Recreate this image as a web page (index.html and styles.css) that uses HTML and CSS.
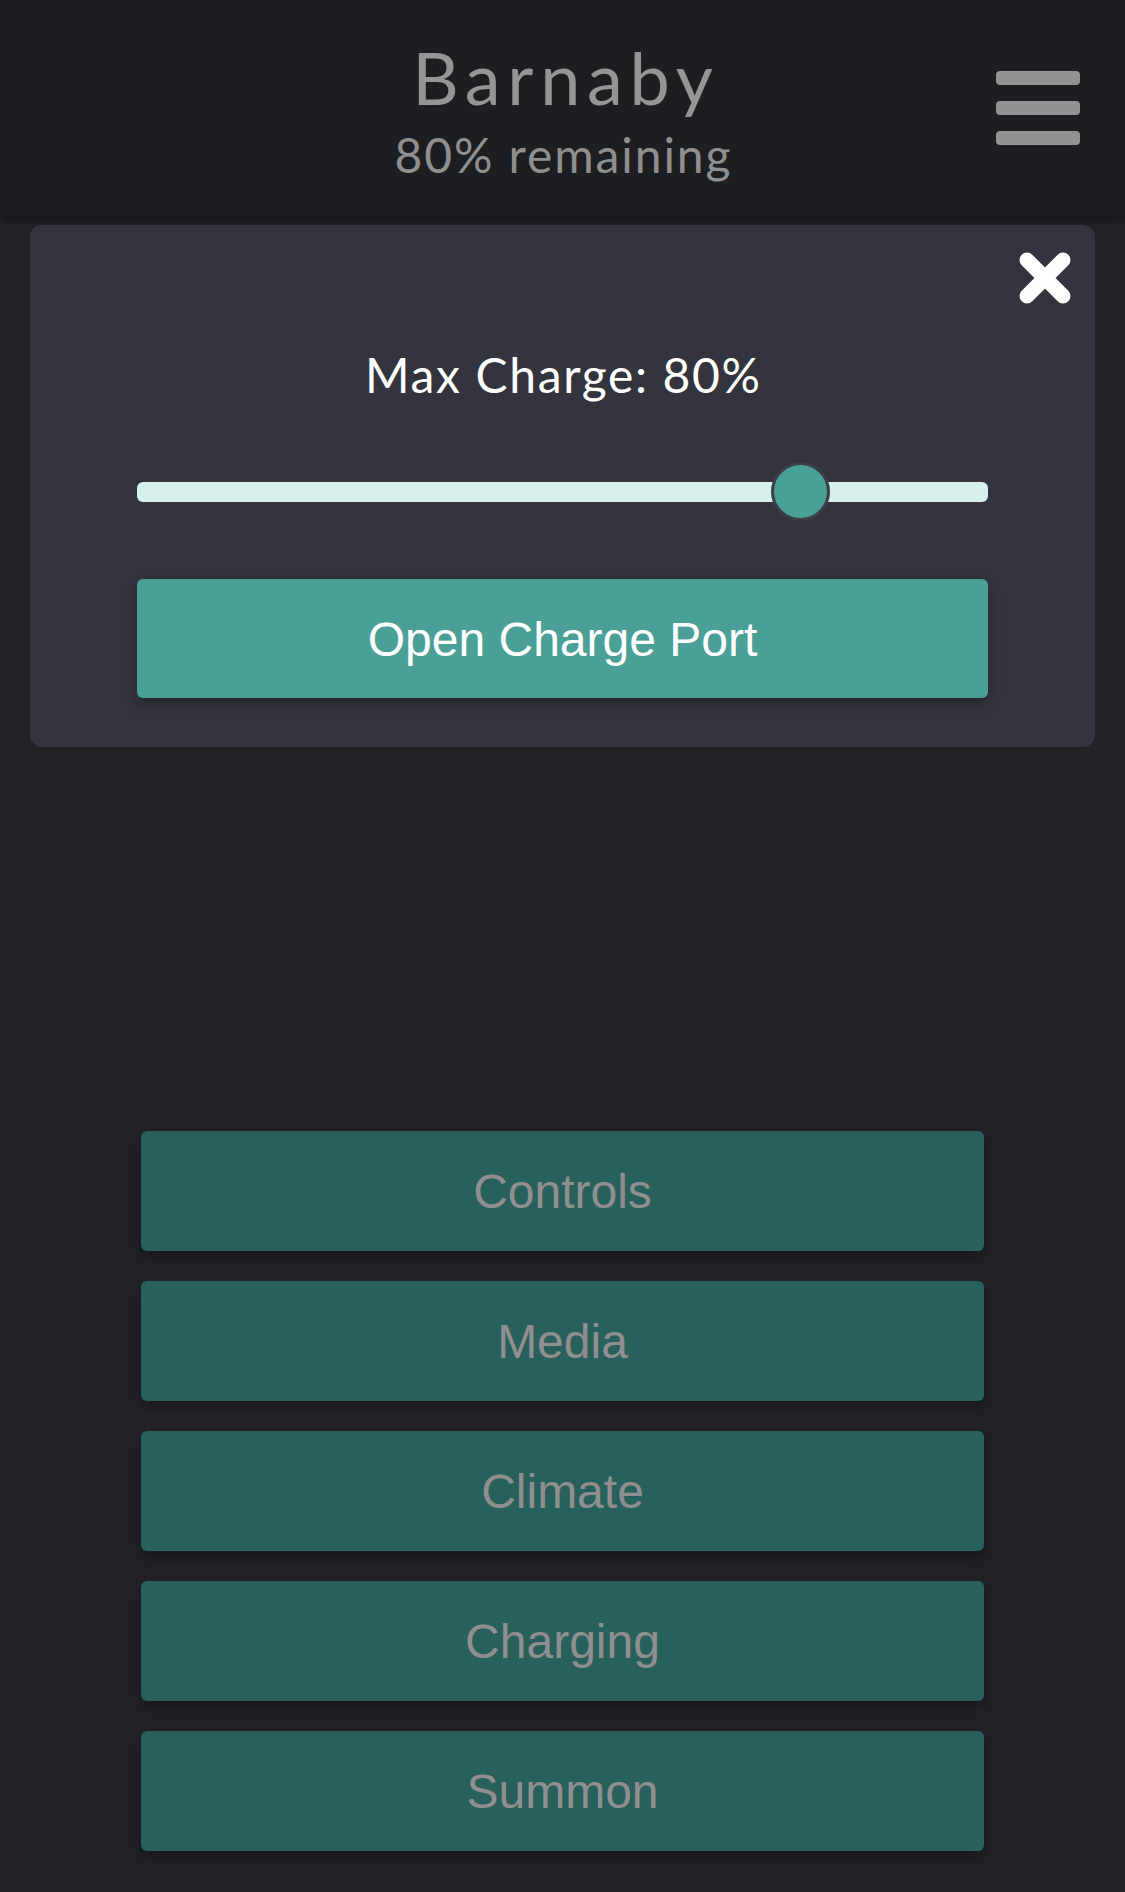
FILE: index.html
```html
<!DOCTYPE html>
<html lang="en">
<head>
<meta charset="utf-8">
<title>Barnaby</title>
<link rel="stylesheet" href="styles.css">
</head>
<body>
<header class="topbar">
  <div class="topbar-spacer"></div>
  <div class="topbar-titles">
    <h1 class="car-name">Barnaby</h1>
    <p class="car-battery">80% remaining</p>
  </div>
  <button class="menu-btn" aria-label="Menu">
    <span class="menu-bar"></span>
    <span class="menu-bar"></span>
    <span class="menu-bar"></span>
  </button>
</header>

<section class="charge-card">
  <div class="close-row">
    <button class="close-btn" aria-label="Close">
      <svg width="52" height="52" viewBox="0 0 52 52">
        <path d="M8 8 L44 44 M44 8 L8 44" stroke="#ffffff" stroke-width="15" stroke-linecap="round" fill="none"/>
      </svg>
    </button>
  </div>
  <p class="charge-label">Max Charge: 80%</p>
  <div class="slider">
    <div class="slider-track"></div>
    <div class="slider-thumb" style="left: calc((100% - 59px) * 0.8);"></div>
  </div>
  <button class="primary-btn">Open Charge Port</button>
</section>

<nav class="nav-list">
  <button class="nav-btn">Controls</button>
  <button class="nav-btn">Media</button>
  <button class="nav-btn">Climate</button>
  <button class="nav-btn">Charging</button>
  <button class="nav-btn">Summon</button>
</nav>
</body>
</html>
```

FILE: styles.css
```css
* {
  box-sizing: border-box;
}

html, body {
  margin: 0;
  padding: 0;
}

body {
  background: #212126;
  width: 1125px;
  min-height: 1892px;
  font-family: "Liberation Sans", Arial, sans-serif;
}

.topbar {
  position: relative;
  z-index: 1;
  height: 216px;
  background: #1d1e21;
  display: grid;
  grid-template-columns: 1fr auto 1fr;
  padding-top: 41px;
  box-shadow: 0 3px 10px rgba(0, 0, 0, 0.35);
}

.topbar-titles {
  text-align: center;
  font-family: "Lato", "Noto Sans", sans-serif;
}

.car-name {
  margin: 0;
  font-size: 72px;
  line-height: 72px;
  font-weight: 400;
  color: #959595;
  letter-spacing: 6.7px;
  margin-right: -6.7px;
}

.car-battery {
  margin: 18px -1.9px 0 0;
  font-size: 48px;
  line-height: 48px;
  color: #8f8f8f;
  letter-spacing: 1.9px;
}

.menu-btn {
  justify-self: end;
  align-self: start;
  margin: 30px 45px 0 0;
  padding: 0;
  border: 0;
  background: none;
  display: flex;
  flex-direction: column;
  gap: 16px;
  width: 84px;
}

.menu-bar {
  display: block;
  width: 84px;
  height: 14px;
  border-radius: 4px;
  background: #939393;
}

.charge-card {
  margin: 9px 30px 0;
  background: #33343d;
  border-radius: 12px;
  padding: 27px 107px 49px;
}

.close-row {
  display: flex;
  justify-content: flex-end;
  margin-right: -83px;
  height: 51px;
}

.close-btn {
  padding: 0;
  border: 0;
  background: none;
  width: 52px;
  height: 52px;
  display: block;
}

.close-btn svg {
  display: block;
}

.charge-label {
  margin: 48px 0 0;
  text-align: center;
  font-family: "Lato", "Noto Sans", sans-serif;
  font-size: 48px;
  line-height: 48px;
  color: #ffffff;
  letter-spacing: 1.65px;
  text-indent: 1.65px;
}

.slider {
  position: relative;
  margin-top: 63px;
  height: 59px;
  display: flex;
  align-items: center;
}

.slider-track {
  width: 100%;
  height: 20px;
  border-radius: 6px;
  background: #d6f1ed;
}

.slider-thumb {
  position: absolute;
  top: 0;
  width: 59px;
  height: 59px;
  border-radius: 50%;
  background: #48a096;
  border: 3px solid #3c3e41;
}

.primary-btn {
  display: block;
  width: 100%;
  height: 119px;
  margin-top: 58px;
  padding-top: 2px;
  border: 0;
  border-radius: 6px;
  background: #4a9f96;
  color: #ffffff;
  font-family: "Liberation Sans", Arial, sans-serif;
  font-size: 48px;
  box-shadow: 0 6px 14px rgba(0, 0, 0, 0.28);
}

.nav-list {
  margin-top: 384px;
  padding: 0 141px;
  display: flex;
  flex-direction: column;
  gap: 30px;
}

.nav-btn {
  display: block;
  width: 100%;
  height: 120px;
  border: 0;
  border-radius: 6px;
  background: #28605b;
  color: #8f8f8f;
  font-family: "Liberation Sans", Arial, sans-serif;
  font-size: 48px;
  box-shadow: 0 6px 14px rgba(0, 0, 0, 0.28);
}
```
